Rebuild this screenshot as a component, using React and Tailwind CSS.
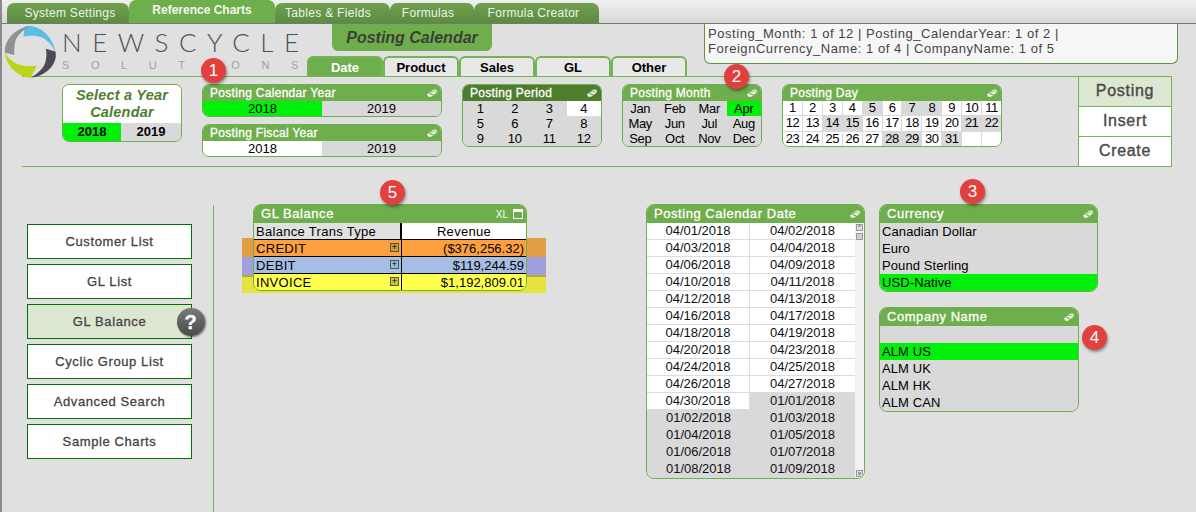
import React from "react";

const mainTabs = [
  { label: "System Settings", w: "w-[122px] pl-[4px]" },
  { label: "Reference Charts", w: "w-[146px]", active: true },
  { label: "Tables & Fields", w: "w-[115px] pr-[9px]" },
  { label: "Formulas", w: "w-[84px] pr-[8px]" },
  { label: "Formula Creator", w: "w-[125px] pr-[6px]" },
];
const docTabs = ["Date", "Product", "Sales", "GL", "Other"];
const navItems = ["Customer List", "GL List", "GL Balance", "Cyclic Group List", "Advanced Search", "Sample Charts"];
const months = ["Jan", "Feb", "Mar", "Apr", "May", "Jun", "Jul", "Aug", "Sep", "Oct", "Nov", "Dec"];
const grayDays = [5, 7, 8, 14, 15, 21, 22, 28, 29, 31];
const dates = [
  ["04/01/2018", "04/02/2018"], ["04/03/2018", "04/04/2018"], ["04/06/2018", "04/09/2018"],
  ["04/10/2018", "04/11/2018"], ["04/12/2018", "04/13/2018"], ["04/16/2018", "04/17/2018"],
  ["04/18/2018", "04/19/2018"], ["04/20/2018", "04/23/2018"], ["04/24/2018", "04/25/2018"],
  ["04/26/2018", "04/27/2018"], ["04/30/2018", "01/01/2018"], ["01/02/2018", "01/03/2018"],
  ["01/04/2018", "01/05/2018"], ["01/06/2018", "01/07/2018"], ["01/08/2018", "01/09/2018"],
];

// little eraser glyph of the list box caption
const Eraser = () => (
  <svg width="12" height="10" viewBox="0 0 12 10" className="shrink-0">
    <path d="M1 6.5 L6.5 2 Q8 1 10 1.6 L11 3 Q11 4.4 9.5 5.5 L5.5 8.5 Q3.5 9.4 2 8.5 Z" fill="#fff" fillOpacity="0.85" />
    <path d="M3.5 5 L7 7" stroke="#6fb04d" strokeWidth="1.2" />
    <path d="M4.5 3.8 Q7.5 2.8 9.5 3.4" stroke="#6fb04d" strokeWidth="0.8" fill="none" />
  </svg>
);

const Caption = ({ title, tall, dark }) => (
  <div className={`flex items-center justify-between pl-[7px] pr-[3px] text-white [-webkit-text-stroke:0.3px] ${tall ? "h-[18px] text-[13px] tracking-[0.55px]" : "h-[16px] text-[12px] tracking-[0.3px]"} ${dark ? "bg-[#4f7d2e]" : "bg-[#6fae4c]"}`}>
    <span>{title}</span>
    <Eraser />
  </div>
);

const Badge = ({ n, className }) => (
  <div className={`absolute z-10 flex h-[25px] w-[25px] items-center justify-center rounded-full bg-[#e2403f] text-[17px] text-white shadow-[1px_2px_3px_rgba(0,0,0,0.4)] ${className}`}>
    {n}
  </div>
);

const Logo = () => (
  <svg width="54" height="54" viewBox="12 12 150 155" className="shrink-0">
    <path d="M72 16 C110 8 150 40 160 88 C150 70 135 52 118 47 C100 42 85 42 68 46 Z" fill="#5cbde3" />
    <path d="M160 88 C168 125 130 160 90 163 C110 150 128 135 132 115 C135 100 135 90 132 80 Z" fill="#4b4c52" />
    <path d="M90 163 C55 165 18 130 15 92 C25 110 40 122 60 127 C75 131 90 131 106 129 Z" fill="#bfd21a" />
    <path d="M15 92 C12 55 45 20 85 16 C65 28 50 42 45 58 C42 70 41 85 42 98 Z" fill="#8f9194" />
  </svg>
);

const MainTab = ({ label, w, active }) => (
  <div className={`flex items-center justify-center rounded-t-[7px] text-[12px] ${w} ${active ? "h-[23px] bg-[#6fae4c] pb-[4px] font-bold text-[#f2f7ee]" : "h-[20px] bg-gradient-to-b from-[#6fa04f] to-[#5c8c40] tracking-[0.3px] text-[#eef3ea]"}`}>
    {label}
  </div>
);

const YearPanel = ({ title, selected }) => (
  <div className="w-[240px] overflow-hidden rounded-[7px] border border-[#6fae4c]">
    <Caption title={title} />
    <div className="grid h-[15px] grid-cols-[119px_1fr] text-center text-[13px] leading-[15px] text-black">
      <div className={selected ? "bg-[#00f00a]" : "bg-white"}>2018</div>
      <div className="bg-[#d9d9d9]">2019</div>
    </div>
  </div>
);

const PeriodPanel = () => (
  <div className="w-[140px] overflow-hidden rounded-[7px] border border-[#6fae4c]">
    <Caption title="Posting Period" dark />
    <div className="grid grid-cols-4 text-center text-[13px] leading-[15px] tracking-[-0.3px] text-black">
      {Array.from({ length: 12 }, (_, i) => (
        <div key={i} className={i === 3 ? "bg-white" : "bg-[#d9d9d9]"}>{i + 1}</div>
      ))}
    </div>
  </div>
);

const MonthPanel = () => (
  <div className="w-[140px] overflow-hidden rounded-[7px] border border-[#6fae4c]">
    <Caption title="Posting Month" />
    <div className="grid grid-cols-4 text-center text-[13px] leading-[15px] tracking-[-0.3px] text-black">
      {months.map((m) => (
        <div key={m} className={m === "Apr" ? "bg-[#00f00a]" : "bg-[#d9d9d9]"}>{m}</div>
      ))}
    </div>
  </div>
);

const DayPanel = () => (
  <div className="w-[220px] overflow-hidden rounded-[7px] border border-[#6fae4c]">
    <Caption title="Posting Day" />
    <div className="grid grid-cols-11 gap-px bg-[#d9d9d9] text-center text-[13px] leading-[14.3px] tracking-[-0.5px] text-black">
      {Array.from({ length: 33 }, (_, i) => (
        <div key={i} className={grayDays.includes(i + 1) ? "bg-[#d9d9d9]" : "bg-white"}>{i < 31 ? i + 1 : ""}</div>
      ))}
    </div>
  </div>
);

const GlBalance = () => {
  const rows = [
    { name: "CREDIT", value: "($376,256.32)", bg: "bg-[#ffa040]", plus: "bg-[#c8a030]" },
    { name: "DEBIT", value: "$119,244.59", bg: "bg-[#a6bee4]", plus: "bg-[#8fc0d8]" },
    { name: "INVOICE", value: "$1,192,809.01", bg: "bg-[#ffff50]", plus: "bg-[#c0c840]" },
  ];
  return (
    <div className="relative ml-[39px] h-[90px] w-[274px]">
      {/* the coloured bands run past the table on both sides */}
      <div className="absolute left-[-11px] top-[34px] flex w-[304px] flex-col">
        <div className="h-[19px] bg-[#e09f42]" />
        <div className="h-[18px] bg-[#a19fdf]" />
        <div className="h-[18px] border-t-2 border-[#b3aa38] bg-[#e5e33d]" />
      </div>
      <div className="relative overflow-hidden rounded-[8px] border border-[#6fae4c]">
        <div className="flex h-[18px] items-center justify-between bg-[#6fae4c] pl-[7px] pr-[3px] text-[13px] tracking-[0.55px] text-white [-webkit-text-stroke:0.3px]">
          <span>GL Balance</span>
          <span className="flex items-center gap-[5px] text-[10px] tracking-normal [-webkit-text-stroke:0px]">
            XL
            <span className="h-[10px] w-[10px] border border-white border-t-[3px]" />
          </span>
        </div>
        <div className="grid grid-cols-[148px_1fr] text-[13px] leading-[17px] tracking-[0.3px] text-black">
          <div className="h-[16px] border-r-2 border-black bg-[#e0e0e0] pl-[2px]">Balance Trans Type</div>
          <div className="h-[16px] bg-white text-center">Revenue</div>
          {rows.map((r) => (
            <React.Fragment key={r.name}>
              <div className={`flex h-[17px] justify-between border-t border-r border-black px-[2px] ${r.bg}`}>
                <span>{r.name}</span>
                <span className={`mt-[3px] flex h-[9px] w-[9px] items-center justify-center border border-[#555] text-[9px] leading-none ${r.plus}`}>+</span>
              </div>
              <div className={`h-[17px] border-t border-black pr-[2px] text-right tracking-normal ${r.bg}`}>{r.value}</div>
            </React.Fragment>
          ))}
        </div>
      </div>
    </div>
  );
};

const DatePanel = () => (
  <div className="ml-[119px] w-[219px] self-start overflow-hidden rounded-[8px] border border-[#6fae4c]">
    <Caption title="Posting Calendar Date" tall />
    <div className="flex">
      <div className="w-[208px] text-center text-[13px] leading-[16px] text-[#111]">
        {dates.map(([a, b], i) => (
          <div key={a} className="grid h-[17px] grid-cols-[103px_1fr]">
            <div className={i <= 10 ? "border-b border-r border-[#dcdcdc] bg-white" : "bg-[#d9d9d9]"}>{a}</div>
            <div className={i <= 9 ? "border-b border-[#dcdcdc] bg-white" : "bg-[#d9d9d9]"}>{b}</div>
          </div>
        ))}
      </div>
      <div className="flex flex-1 flex-col items-center justify-between bg-[#f2f2f2] py-[1px]">
        <div className="flex flex-col items-center gap-[2px]">
          <div className="flex h-[7px] w-[7px] items-center justify-center border border-[#999] bg-[#ddd] text-[5px] leading-none">^</div>
          <div className="h-[7px] w-[7px] border border-[#999] bg-[#cfcfcf]" />
        </div>
        <div className="flex h-[7px] w-[7px] items-center justify-center border border-[#999] bg-[#ddd] text-[5px] leading-none">v</div>
      </div>
    </div>
  </div>
);

const SimpleList = ({ title, items, selected, width }) => (
  <div className={`overflow-hidden rounded-[8px] border border-[#6fae4c] ${width}`}>
    <Caption title={title} tall />
    <div className="bg-[#d9d9d9] text-[13px] leading-[17px] tracking-[0.1px] text-black">
      {items.map((item, i) => (
        <div key={i} className={`h-[17px] pl-[2px] ${item === selected ? "bg-[#00f00a]" : ""}`}>{item}</div>
      ))}
    </div>
  </div>
);

export default function App() {
  return (
    <div className="relative h-[512px] w-[1196px] overflow-hidden border-l-2 border-[#8a8a8a] bg-[#e0e0e0] font-['Liberation_Sans',Arial,sans-serif]">
      {/* sheet tabs */}
      <div className="flex h-[24px] items-end border-b border-[#777] bg-gradient-to-b from-[#f0f0f0] to-[#d8d8d8] pl-[5px]">
        {mainTabs.map((t) => (
          <MainTab key={t.label} {...t} />
        ))}
      </div>

      {/* logo, title, doc tabs and current selections */}
      <div className="flex h-[52px]">
        <div className="flex w-[305px] shrink-0 pl-[1px] pt-[1px]">
          <Logo />
          <div className="ml-[5px] pt-[3px]">
            <div className="font-['Lato',sans-serif] text-[26px] font-light leading-[29px] tracking-[10.5px] text-[#4f5055]">NEWSCYCLE</div>
            <div className="mt-[2px] text-[11px] leading-[13px] tracking-[21.6px] text-[#a0a0a0]">SOLUTIONS</div>
          </div>
        </div>
        <div className="w-[397px] shrink-0">
          <div className="ml-[25px] flex h-[27px] w-[160px] items-center justify-center rounded-b-[6px] bg-[#6fae4c] text-[16px] font-bold italic text-[#3a3f36]">
            Posting Calendar
          </div>
          <div className="mt-[5px] flex h-[20px]">
            {docTabs.map((t, i) => (
              <div
                key={t}
                className={`flex w-[76px] items-center justify-center rounded-t-[6px] border-2 border-b-0 border-[#76b356] pt-[1px] text-[13px] font-bold ${i === 0 ? "bg-[#6fae4c] text-white" : "bg-[#e8e8e8] text-black"}`}
              >
                {t}
              </div>
            ))}
          </div>
        </div>
        <div className="h-[40px] w-[474px] shrink-0 rounded-b-[6px] border border-t-0 border-[#5f9440] bg-[#f6f6f6] px-[3px] pt-[2px] text-[13px] leading-[15px] tracking-[0.55px] text-[#444]">
          Posting_Month: 1 of 12 | Posting_CalendarYear: 1 of 2 |
          <br />
          ForeignCurrency_Name: 1 of 4 | CompanyName: 1 of 5
        </div>
      </div>

      {/* filter band */}
      <div className="ml-[20px] flex h-[91px] w-[1150px] border-y border-[#76b356]">
        <div className="ml-[40px] mt-[7px] h-[58px] w-[120px] overflow-hidden rounded-[7px] border border-[#6fae4c]">
          <div className="h-[38px] bg-white pt-[2px] text-center text-[14.5px] font-bold italic leading-[17px] tracking-[0.2px] text-[#4f7d2e]">
            Select a Year
            <br />
            Calendar
          </div>
          <div className="grid h-[18px] grid-cols-[58px_1fr] text-center text-[13px] font-bold leading-[18px] text-black">
            <div className="bg-[#00f00a]">2018</div>
            <div className="bg-[#d9d9d9]">2019</div>
          </div>
        </div>
        <div className="ml-[20px] mt-[7px] flex flex-col gap-[7px]">
          <YearPanel title="Posting Calendar Year" selected />
          <YearPanel title="Posting Fiscal Year" />
        </div>
        <div className="ml-[20px] mt-[7px]"><PeriodPanel /></div>
        <div className="ml-[20px] mt-[7px]"><MonthPanel /></div>
        <div className="ml-[20px] mt-[7px]"><DayPanel /></div>
        <div className="ml-[76px] flex w-[94px] flex-col border-x border-[#76b356] text-center text-[16px] leading-[27px] tracking-[0.7px] text-[#4a4a4a] [-webkit-text-stroke:0.4px]">
          <div className="h-[30px] border-b border-[#76b356] bg-[#dce7d2]">Posting</div>
          <div className="h-[30px] border-b border-[#76b356] bg-white">Insert</div>
          <div className="flex-1 bg-white">Create</div>
        </div>
      </div>

      {/* main area */}
      <div className="flex pt-[37px]">
        <div className="ml-[25px] mt-[20px] flex w-[165px] shrink-0 flex-col gap-[5px]">
          {navItems.map((item) => (
            <div
              key={item}
              className={`relative h-[35px] border border-[#007000] text-center text-[13px] leading-[33px] tracking-[0.6px] text-[#444] [-webkit-text-stroke:0.3px] ${item === "GL Balance" ? "bg-[#dce7d2]" : "bg-white"}`}
            >
              {item}
              {item === "GL Balance" && (
                <div className="absolute right-[-14px] top-[3px] flex h-[28px] w-[28px] items-center justify-center rounded-full bg-gradient-to-b from-[#7a7a7a] to-[#4a4a4a] text-[20px] font-bold text-white shadow-[1px_1px_2px_rgba(0,0,0,0.5)]">
                  ?
                </div>
              )}
            </div>
          ))}
        </div>
        <div className="ml-[21px] mt-[1px] h-[307px] w-px shrink-0 bg-[#76b356]" />
        <GlBalance />
        <DatePanel />
        <div className="ml-[14px] flex flex-col gap-[15px]">
          <SimpleList title="Currency" width="w-[219px]" items={["Canadian Dollar", "Euro", "Pound Sterling", "USD-Native"]} selected="USD-Native" />
          <SimpleList title="Company Name" width="w-[200px]" items={["", "ALM US", "ALM UK", "ALM HK", "ALM CAN"]} selected="ALM US" />
        </div>
      </div>

      <Badge n="1" className="left-[199px] top-[58px]" />
      <Badge n="2" className="left-[722px] top-[64px]" />
      <Badge n="3" className="left-[958px] top-[179px]" />
      <Badge n="4" className="left-[1080px] top-[325px]" />
      <Badge n="5" className="left-[378px] top-[180px]" />
    </div>
  );
}
